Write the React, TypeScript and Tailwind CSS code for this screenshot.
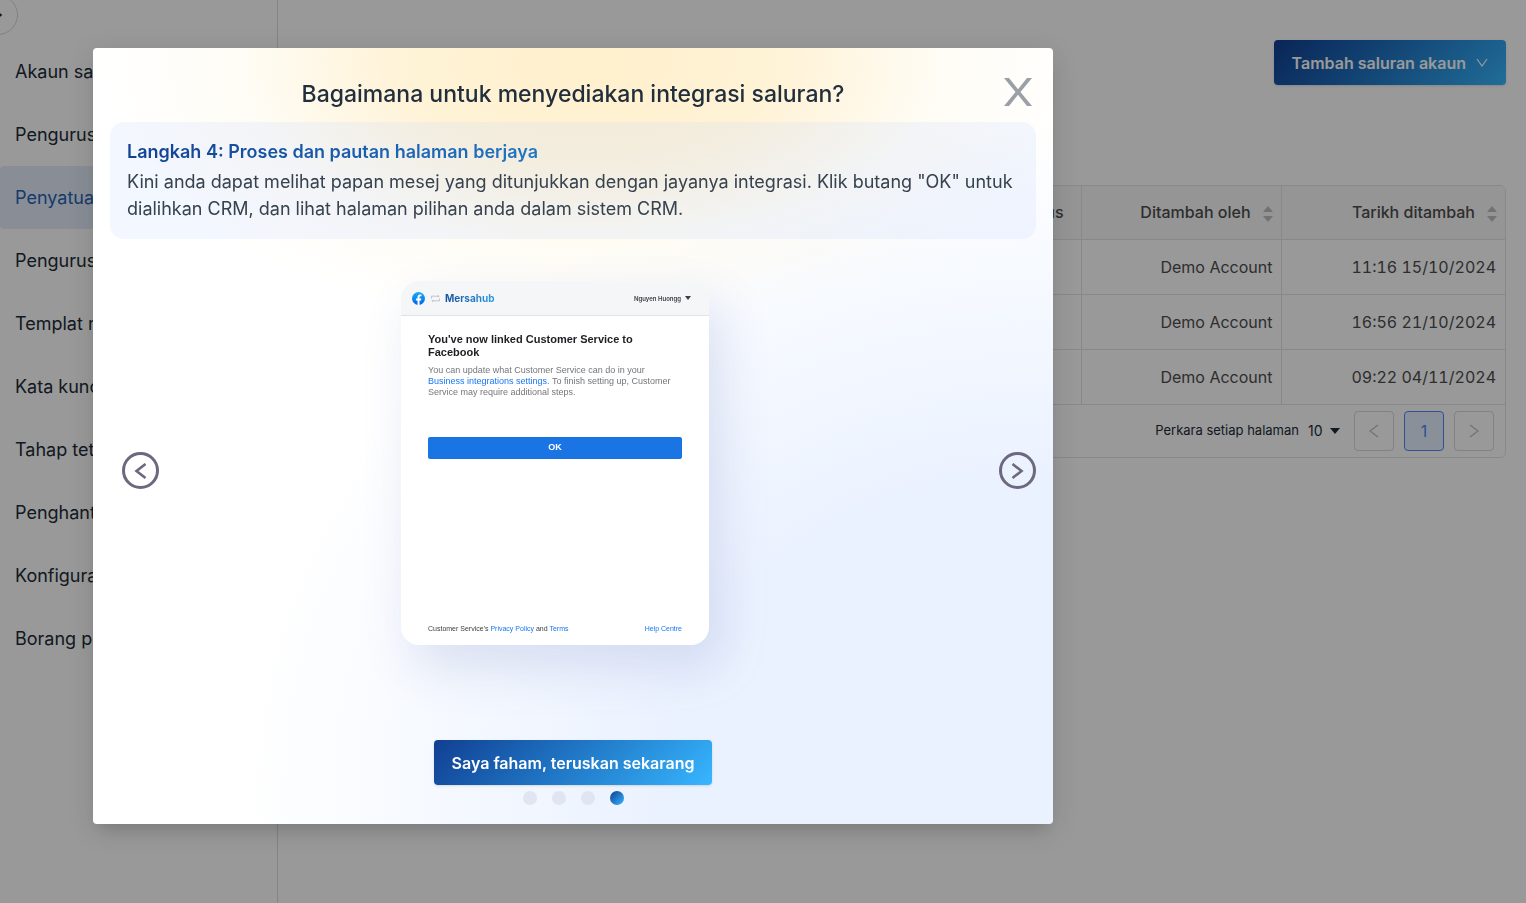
import { useState } from 'react'
import { ArrowRight } from 'lucide-react'

const MENU = [
  'Akaun saya',
  'Pengurusan',
  'Penyatuan',
  'Pengurusan',
  'Templat mesej',
  'Kata kunci',
  'Tahap tetapan',
  'Penghantaran',
  'Konfigurasi',
  'Borang pesanan',
]

const ROWS = [
  { by: 'Demo Account', date: '11:16 15/10/2024' },
  { by: 'Demo Account', date: '16:56 21/10/2024' },
  { by: 'Demo Account', date: '09:22 04/11/2024' },
]

export default function App() {
  const [open, setOpen] = useState(true)

  return (
    <div className="relative flex min-h-screen overflow-hidden bg-white font-['Inter',sans-serif] text-[#212b36]">
      <Sidebar />
      <main className="min-w-0 flex-1 px-5 pt-10">
        <div className="flex justify-end">
          <button
            onClick={() => setOpen(true)}
            className="flex h-[45px] items-center gap-2.5 rounded bg-linear-135 from-[#123f92] to-[#38b6ff] px-[18px] text-base font-semibold text-white shadow-sm"
          >
            Tambah saluran akaun
            <svg width="12" height="9" viewBox="0 0 12 9" fill="none" stroke="currentColor" strokeWidth="1.2">
              <path d="M1 1l5 7 5-7" />
            </svg>
          </button>
        </div>
        <AccountTable />
      </main>
      {open && <GuideDialog onClose={() => setOpen(false)} />}
    </div>
  )
}

function Sidebar() {
  return (
    <aside className="relative w-[278px] shrink-0 border-r border-[#dcdcdc] pt-10">
      <button
        aria-label="Tutup menu"
        className="absolute -top-[5px] -left-[22px] flex size-10 items-center justify-center rounded-full border border-[#d9d9d9]"
      >
        <ArrowRight size={10} strokeWidth={4} />
      </button>
      <nav>
        {MENU.map((label, i) => (
          <a
            key={i}
            href="#"
            className={
              i === 2
                ? 'flex h-[63px] items-center rounded bg-[#e4edfa] px-[15px] text-lg text-[#2463b4]'
                : 'flex h-[63px] items-center px-[15px] text-lg'
            }
          >
            {label}
          </a>
        ))}
      </nav>
    </aside>
  )
}

function AccountTable() {
  return (
    <section className="mt-[100px] overflow-hidden rounded-md border border-[#e3e3e3] text-base text-[#4d4d4d]">
      <table className="w-full table-fixed border-collapse text-right">
        <colgroup>
          <col />
          <col className="w-[200px]" />
          <col className="w-[224px]" />
        </colgroup>
        <thead>
          <tr className="h-[53px] border-b border-[#e3e3e3] bg-[#f8f8f8] text-[#4d4d4d]">
            <th className="border-r border-[#e3e3e3] pr-[17px] font-medium">Status</th>
            <th className="border-r border-[#e3e3e3] pr-2 font-medium">
              <SortLabel text="Ditambah oleh" />
            </th>
            <th className="pr-2 font-medium">
              <SortLabel text="Tarikh ditambah" />
            </th>
          </tr>
        </thead>
        <tbody>
          {ROWS.map((row) => (
            <tr key={row.date} className="h-[55px] border-b border-[#e3e3e3]">
              <td className="border-r border-[#e3e3e3]" />
              <td className="border-r border-[#e3e3e3] pr-2">{row.by}</td>
              <td className="pr-[9px] tabular-nums">{row.date}</td>
            </tr>
          ))}
        </tbody>
      </table>

      <div className="flex h-[52px] items-center justify-end gap-2.5 pr-[11px] text-sm">
        <label className="flex items-center text-[13px] text-[#212b36]">
          Perkara setiap halaman
          <select defaultValue="10" className="ml-[9px] w-[22px] appearance-none text-sm">
            <option>10</option>
          </select>
          <svg width="10" height="6" viewBox="0 0 10 6" className="mr-1 fill-[#212b36]">
            <path d="M0 0h10L5 6z" />
          </svg>
        </label>
        <button aria-label="Sebelumnya" className="flex size-10 items-center justify-center rounded border border-[#d9d9d9] text-[#bfbfbf]">
          <Angle dir="left" />
        </button>
        <button className="size-10 rounded border border-[#4a8cf7] bg-[#e6f0ff] text-base text-[#4a86f0]">1</button>
        <button aria-label="Seterusnya" className="flex size-10 items-center justify-center rounded border border-[#d9d9d9] text-[#bfbfbf]">
          <Angle dir="right" />
        </button>
      </div>
    </section>
  )
}

function SortLabel({ text }: { text: string }) {
  return (
    <span className="flex items-center justify-end gap-3">
      {text}
      <svg width="10" height="16" viewBox="0 0 10 16" className="mt-1 fill-[#bfbfbf]">
        <path d="M0 6L5 0l5 6zM0 10h10l-5 6z" />
      </svg>
    </span>
  )
}

function Angle({ dir }: { dir: 'left' | 'right' }) {
  return (
    <svg width="10" height="14" viewBox="0 0 10 14" fill="none" stroke="currentColor" strokeWidth="1.3">
      <path d={dir === 'left' ? 'M9 1L1 7l8 6' : 'M1 1l8 6-8 6'} />
    </svg>
  )
}

function GuideDialog({ onClose }: { onClose: () => void }) {
  return (
    <div className="fixed inset-0 flex items-start justify-center bg-black/40 pt-12 pr-[380px]">
      <div
        role="dialog"
        aria-labelledby="guide-title"
        className="w-[960px] rounded bg-white bg-[radial-gradient(52%_34%_at_52%_2%,#fff0cc_0%,rgba(255,241,208,0.85)_38%,rgba(255,248,230,0.4)_70%,transparent_100%),radial-gradient(85%_86%_at_100%_96%,#ebf2ff_0%,#ebf2ff_48%,rgba(235,242,255,0)_100%)] px-[17px] pb-[19px] shadow-[0_11px_15px_-7px_rgba(0,0,0,0.15),0_6px_30px_4px_rgba(0,0,0,0.1)]"
      >
        <header className="relative flex h-[74px] items-end justify-center pb-3">
          <h2 id="guide-title" className="text-[23px] leading-8 font-medium text-[#212f3d]">
            Bagaimana untuk menyediakan integrasi saluran?
          </h2>
          <button aria-label="Tutup" onClick={onClose} className="absolute top-[30px] right-1">
            <svg width="28" height="28" viewBox="0 0 28 28" className="fill-[#9aa0a5]">
              <path d="M0 0h5l9 11.2L23 0h5L16.5 14 28 28h-5l-9-11.2L5 28H0l11.5-14z" />
            </svg>
          </button>
        </header>

        <section className="rounded-[14px] bg-[rgba(195,215,255,0.2)] px-[17px] pt-4 pb-[17px] text-lg">
          <h3 className="bg-linear-135 from-[#123f92] to-[#38b6ff] bg-clip-text leading-7 font-semibold text-transparent">
            Langkah 4: Proses dan pautan halaman berjaya
          </h3>
          <p className="mt-0.5 leading-[27px] text-[#36424e]">
            Kini anda dapat melihat papan mesej yang ditunjukkan dengan jayanya integrasi. Klik butang "OK" untuk
            dialihkan CRM, dan lihat halaman pilihan anda dalam sistem CRM.
          </p>
        </section>

        <div className="mt-[42px] flex items-center justify-between pl-3">
          <NavButton dir="left" />
          <div className="pr-12 pb-[15px]">
            <LinkedCard />
          </div>
          <NavButton dir="right" />
        </div>

        <footer className="mt-20 flex flex-col items-center gap-1.5">
          <button
            onClick={onClose}
            className="h-[45px] rounded bg-linear-135 from-[#123f92] to-[#38b6ff] px-[18px] text-base font-semibold text-white shadow-sm"
          >
            Saya faham, teruskan sekarang
          </button>
          <div className="flex gap-[15px]">
            {[1, 2, 3].map((n) => (
              <button key={n} aria-label={`Langkah ${n}`} className="size-3.5 rounded-full bg-[#e0e6f1]" />
            ))}
            <button aria-label="Langkah 4" className="size-3.5 rounded-full bg-linear-135 from-[#123f92] to-[#38b6ff]" />
          </div>
        </footer>
      </div>
    </div>
  )
}

function NavButton({ dir }: { dir: 'left' | 'right' }) {
  return (
    <button
      aria-label={dir === 'left' ? 'Langkah sebelumnya' : 'Langkah seterusnya'}
      className="flex size-[37px] items-center justify-center rounded-full border-3 border-[#6b687f] text-[#6b687f]"
    >
      <svg width="13" height="16" viewBox="0 0 13 16" fill="none" stroke="currentColor" strokeWidth="2.6">
        <path d={dir === 'left' ? 'M11.5 1L2.5 8l9 7' : 'M1.5 1l9 7-9 7'} />
      </svg>
    </button>
  )
}

function LinkedCard() {
  return (
    <article className="flex h-[364px] w-[308px] flex-col overflow-hidden rounded-[18px] bg-white font-['Liberation_Sans',sans-serif] shadow-[12px_22px_50px_rgba(60,80,160,0.15)]">
      <header className="flex h-[35px] shrink-0 items-center border-b border-[#dfe2e6] bg-[#f4f6f8] pr-[18px] pl-[11px]">
        <svg width="13" height="13" viewBox="0 0 24 24">
          <defs>
            <linearGradient id="fb" x2="0" y2="1">
              <stop stopColor="#18acfe" />
              <stop offset="1" stopColor="#0163e0" />
            </linearGradient>
          </defs>
          <circle cx="12" cy="12" r="12" fill="url(#fb)" />
          <path
            d="M16.7 15.5l.5-3.5h-3.3V9.7c0-1 .5-1.9 2-1.9h1.5v-3s-1.4-.2-2.7-.2c-2.7 0-4.5 1.7-4.5 4.7V12h-3v3.5h3v8.3a12 12 0 0 0 3.7 0v-8.3z"
            fill="#fff"
          />
        </svg>
        <svg width="9" height="7" viewBox="0 0 9 7" fill="none" stroke="#b4b8be" strokeWidth="0.8" className="ml-1.5">
          <path d="M.5 3.6V1.2h7.5M7 .2l1 1-1 1M8.5 3.4v2.4H1M2 6.8l-1-1 1-1" />
        </svg>
        <span className="ml-[5px] bg-linear-to-r from-[#14529f] to-[#2f9ae6] bg-clip-text text-[10px] font-bold text-transparent font-['Inter',sans-serif]">
          Mersahub
        </span>
        <span className="ml-auto text-[6px] font-semibold text-[#3c4043] font-['Inter',sans-serif]">Nguyen Huongg</span>
        <svg width="6" height="4" viewBox="0 0 6 4" className="ml-1 fill-[#3c4043]">
          <path d="M0 0h6L3 4z" />
        </svg>
      </header>
      <div className="flex flex-1 flex-col px-[27px] pt-[17px] pb-[11px]">
        <h4 className="text-[11px] leading-[13px] font-bold text-[#1c1e21]">
          You've now linked Customer Service to Facebook
        </h4>
        <p className="mt-1.5 text-[9px] leading-[11px] text-[#73767a]">
          You can update what Customer Service can do in your{' '}
          <a href="#" className="text-[#1877f2]">Business integrations settings.</a> To finish setting up, Customer
          Service may require additional steps.
        </p>
        <button className="mt-[39px] h-[22px] rounded-xs bg-[#1b74e4] text-[9px] font-bold text-white">OK</button>
        <div className="mt-auto flex justify-between text-[7px] leading-[10px] text-[#3c4043]">
          <span>
            Customer Service's <a href="#" className="text-[#1877f2]">Privacy Policy</a> and{' '}
            <a href="#" className="text-[#1877f2]">Terms</a>
          </span>
          <a href="#" className="text-[#1877f2]">Help Centre</a>
        </div>
      </div>
    </article>
  )
}
